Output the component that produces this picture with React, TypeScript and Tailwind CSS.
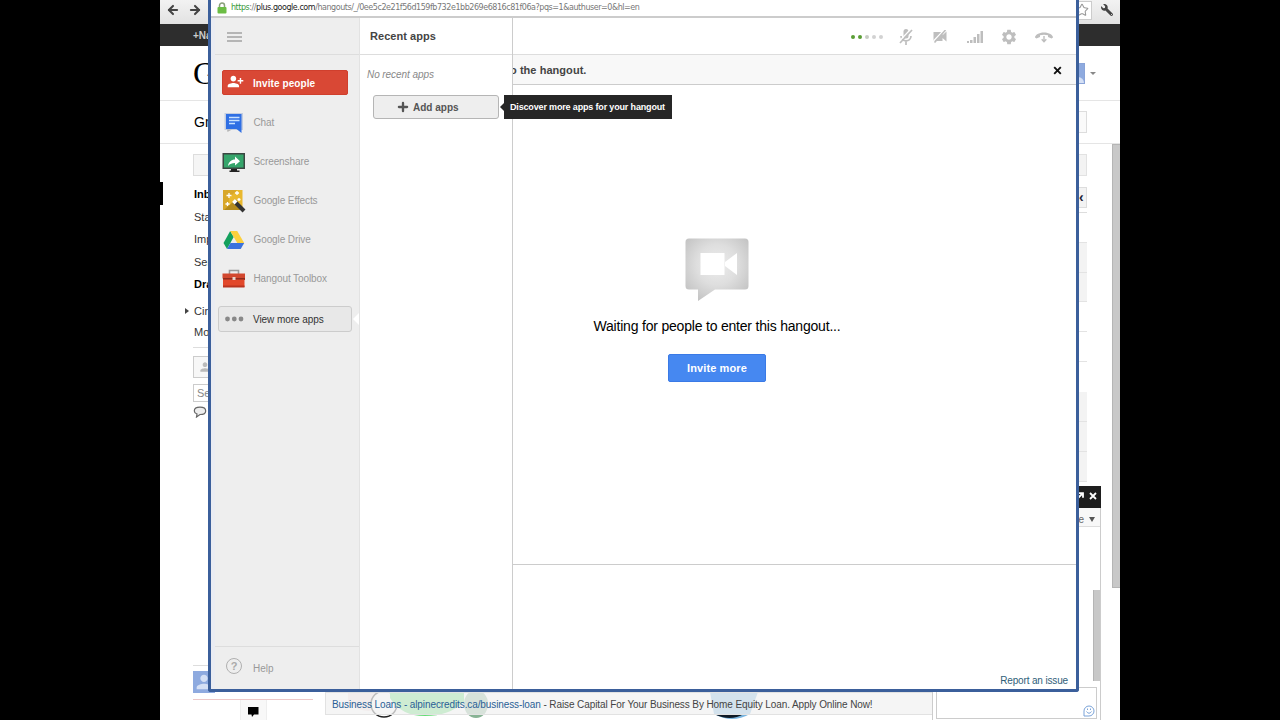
import React from 'react';
import { ArrowLeft, ArrowRight, Star, Plus } from 'lucide-react';
import { MdPersonAddAlt1, MdSettings, MdPerson } from 'react-icons/md';
import { FaWrench } from 'react-icons/fa';

const ChatIcon = () => (
  <svg width="24" height="22" viewBox="0 0 24 22">
    <rect x="2.500" y="1" width="18.500" height="17" fill="#c3cde0" />
    <path d="M4 2h15.500v19l-5-4H4z" fill="#2f6fe4" />
    <path d="M5 17.500h5l-4.500 2.500z" fill="#b5b5b5" />
    <path d="M7 5.500h10.500M7 8.500h10.500M7 11.500h6" stroke="#c9e2ff" strokeWidth="1.700" />
  </svg>
);

const ScreenshareIcon = () => (
  <svg width="24" height="22" viewBox="0 0 24 22">
    <rect x="0.500" y="2" width="22.500" height="16" fill="#3b4742" />
    <rect x="2" y="3.500" width="19.500" height="13" fill="#35a56b" />
    <path d="M9 18h6v1.500h2.500V21h-10v-1.500H9z" fill="#222" />
    <path d="M6 15c.5-4 3.500-6.500 7-6.500V5.500l5 4.700-5 4.300V12c-3 0-5 .8-7 3z" fill="#fff" />
  </svg>
);

const EffectsIcon = () => (
  <svg width="24" height="24" viewBox="0 0 24 24">
    <rect x="1" y="1" width="19.500" height="20" fill="#e9b82e" />
    <path d="M1 1h14L7 9v12H1z" fill="#d8a72a" />
    <path d="M2 21L12 12l8.500 9z" fill="#b58b1c" />
    <path d="M12 12l10 10" stroke="#333" strokeWidth="4" />
    <path d="M11.500 11.500l2.500 2.500" stroke="#fff" strokeWidth="4" />
    <path d="M7 4v5M4.500 6.500h5M15 2v4M13 4h4M5.500 13v4M3.500 15h4M17 9v3M15.500 10.500h3" stroke="#fff" strokeWidth="1.300" />
  </svg>
);

const DriveIcon = () => (
  <svg width="24" height="22" viewBox="0 0 24 22">
    <path d="M8.200 2L1.500 14l3.500 6 6.700-12z" fill="#14a05d" />
    <path d="M8.200 2h7l7 12h-7z" fill="#fcd03d" />
    <path d="M8.500 14h13.700l-3.500 6H5z" fill="#3a72dd" />
  </svg>
);

const ToolboxIcon = () => (
  <svg width="24" height="20" viewBox="0 0 24 20">
    <path d="M7.500 5V1.500h9V5" fill="none" stroke="#999" strokeWidth="1.600" />
    <rect x="0.500" y="4.500" width="22.500" height="5" fill="#d2482f" />
    <path d="M1 9h22v2H1z" fill="#8f2b1d" />
    <rect x="1" y="10.500" width="21.500" height="7.500" fill="#e2482b" />
    <rect x="1" y="16.500" width="21.500" height="2" fill="#b93420" />
    <rect x="10.500" y="8" width="3" height="3" fill="#e8d4cc" />
  </svg>
);

const MicOffIcon = () => (
  <svg width="14" height="18" viewBox="0 0 14 18" fill="none">
    <rect x="4.500" y="1" width="5" height="9.500" rx="2.500" fill="#bebebe" />
    <path d="M2 8c0 6.500 10 6.500 10 0M7 12.500V17" stroke="#bebebe" strokeWidth="1.700" />
    <path d="M11.500 1.500L0 13.500" stroke="#fff" strokeWidth="1.300" />
    <path d="M13 2L1 15" stroke="#bebebe" strokeWidth="1.700" />
  </svg>
);

const CameraOffIcon = () => (
  <svg width="14" height="13" viewBox="0 0 14 13">
    <path d="M.5 2h9v3.200L13.500 1.500v10L9.500 8v3h-9z" fill="#bebebe" />
    <path d="M11 0L0 11.500" stroke="#fff" strokeWidth="1.300" />
    <path d="M12.500 0L1.500 12.500" stroke="#bebebe" strokeWidth="1.600" />
  </svg>
);

const SignalIcon = () => (
  <svg width="18" height="14" viewBox="0 0 18 14" fill="#bebebe">
    <rect x="0" y="11" width="2" height="2" />
    <rect x="3" y="10" width="2.500" height="3" />
    <rect x="6.500" y="7" width="2.500" height="6" />
    <rect x="10" y="4" width="2.500" height="9" />
    <rect x="13.500" y="1" width="2.500" height="12" />
  </svg>
);

const HangupIcon = () => (
  <svg width="20" height="14" viewBox="0 0 20 14">
    <path d="M1 7.500C1 5 5 2.500 10 2.500S19 5 19 7.500l-1.500 1-3.500-1.500V5.300c-2.500-.9-5.500-.9-8 0V7L2.500 8.500z" fill="#bebebe" />
    <path d="M10 6v5M7.700 9.300l2.300 2.400 2.300-2.400" stroke="#bebebe" strokeWidth="1.400" fill="none" />
  </svg>
);

const HangoutLogo = () => (
  <svg width="64" height="64" viewBox="0 0 64 64">
    <defs>
      <radialGradient id="bubble" cx="50%" cy="42%" r="65%">
        <stop offset="0" stopColor="#ededed" />
        <stop offset=".5" stopColor="#dedede" />
        <stop offset="1" stopColor="#c2c2c2" />
      </radialGradient>
    </defs>
    <path d="M4 .5h56a3.500 3.500 0 0 1 3.500 3.500v44a3.500 3.500 0 0 1-3.500 3.500H30L13 63V51.500H4A3.500 3.500 0 0 1 .5 48V4A3.500 3.500 0 0 1 4 .5z" fill="url(#bubble)" />
    <path d="M15.500 15h24v22h-24zM40 24l12-9v22l-12-9z" fill="#fff" />
  </svg>
);

const apps = [
  { name: 'Chat', icon: <ChatIcon /> },
  { name: 'Screenshare', icon: <ScreenshareIcon /> },
  { name: 'Google Effects', icon: <EffectsIcon /> },
  { name: 'Google Drive', icon: <DriveIcon /> },
  { name: 'Hangout Toolbox', icon: <ToolboxIcon /> },
];

const folders = [
  { name: 'Inbox', bold: true },
  { name: 'Starred', bold: false },
  { name: 'Important', bold: false },
  { name: 'Sent Mail', bold: false },
  { name: 'Drafts', bold: true },
];

function MailPage() {
  return (
    <div className="flex h-full flex-col bg-white">
      <div className="flex h-6 shrink-0 items-center bg-gradient-to-b from-[#f2f2f2] to-[#e2e2e2] pb-1 pl-1.5 pr-[7px] text-[#444]">
        <ArrowLeft size={14} strokeWidth={3.500} />
        <ArrowRight size={14} strokeWidth={3.500} className="ml-2" />
        <div className="ml-auto flex h-[19px] w-[26px] items-center justify-end border border-l-0 border-[#ccc] bg-white pr-0.5">
          <Star size={14} strokeWidth={1.800} className="text-[#999]" />
        </div>
        <FaWrench size={12} className="ml-[9px] -scale-x-100" />
      </div>
      <div className="h-[22px] shrink-0 bg-[#2d2d2d] pl-[33px] text-[10px] font-bold leading-[23px] text-[#ccc]">+Nathan</div>
      <div className="flex h-[55px] shrink-0 items-center justify-between border-b border-[#e5e5e5] pl-[33px] pr-6">
        <span className="font-['Liberation_Serif',serif] text-[32px] leading-none text-black">G</span>
        <div className="flex items-center gap-[5px]">
          <div className="flex h-[21px] w-5 items-end justify-end overflow-hidden border border-[#8aa4d8] bg-[#8eaadf]">
            <div className="size-1.5 rounded-tr-full bg-[#d5e0f5]"></div>
          </div>
          <div className="border-x-[3px] border-t-[3px] border-x-transparent border-t-[#888]"></div>
        </div>
      </div>
      <div className="flex h-[43px] shrink-0 items-center justify-between border-b border-[#e5e5e5] pl-[34px] pr-[33px]">
        <span className="text-[14px] text-black">Gmail</span>
        <div className="h-[22px] w-5 border border-[#ddd] bg-[#fafafa]"></div>
      </div>

      <div className="flex min-h-0 flex-1">
        <div className="flex w-[153px] shrink-0 flex-col text-[11px] text-[#333]">
          <div className="ml-[33px] mt-2.5 h-[22px] shrink-0 border border-[#ddd] bg-[#f5f5f5]"></div>
          <div className="mt-1.5 flex flex-col">
            {folders.map((folder) => (
              <div
                key={folder.name}
                className={folder.bold ? 'flex h-[22.500px] items-center font-bold text-black' : 'flex h-[22.500px] items-center'}
              >
                <div className={folder.name === 'Inbox' ? 'h-full w-[3px] bg-black' : 'w-[3px]'}></div>
                <span className="pl-[31px] pt-0.5">{folder.name}</span>
              </div>
            ))}
          </div>
          <div className="mt-[6px] flex h-[21px] items-center">
            <div className="ml-[25px] border-y-[3px] border-l-4 border-y-transparent border-l-[#444]"></div>
            <span className="pl-[5px]">Circles</span>
          </div>
          <div className="flex h-[22px] items-center pl-[34px]">More</div>
          <div className="ml-[33px] mt-[3px] border-t border-[#ddd]"></div>
          <div className="ml-[33px] mt-2 flex h-[22px] shrink-0 items-center border border-[#ccc] bg-[#f7f7f7] pl-1">
            <MdPerson size={14} className="text-[#bbb]" />
          </div>
          <div className="ml-[33px] mt-[6px] h-[18px] shrink-0 border border-[#ccc] pl-[3px] leading-4 text-[#888]">Search</div>
          <svg width="14" height="12" viewBox="0 0 14 12" className="ml-[33px] mt-1 shrink-0">
            <path d="M7 1.200c3.500 0 5.700 1.600 5.700 3.700S10.500 8.500 7 8.500L3.500 11l.5-3C2.200 7.300 1.300 6.300 1.300 4.900c0-2.100 2.200-3.700 5.700-3.700z" fill="#eee" stroke="#666" strokeWidth="1.200" />
          </svg>
          <div className="ml-[33px] mt-[247px] border-t border-[#ddd]"></div>
          <div className="ml-[33px] mt-[5px] flex h-[22px] w-[22px] shrink-0 items-end overflow-hidden bg-[#8eaadf]">
            <MdPerson size={22} className="text-[#d5e0f5]" />
          </div>
          <div className="ml-[33px] mt-1.5 w-[120px] border-t border-[#ecc8c8]"></div>
          <div className="ml-20 flex h-5 w-[27px] shrink-0 items-center justify-center border-x border-[#eee] bg-[#f8f8f8] pt-1">
            <svg width="11" height="10" viewBox="0 0 11 10"><path d="M0 0h10.500v7.500H6L4 10 3.500 7.500H0z" fill="#000" /></svg>
          </div>
        </div>

        <div className="flex flex-1 flex-col justify-end">
          <div className="relative ml-3 h-[28px] w-[620px]">
            <svg width="620" height="28" className="absolute left-0 top-0">
              <path d="M23 0h34v16q-20 8-34-6z" fill="#f3dede" />
              <circle cx="59" cy="12" r="13" fill="#fff" stroke="#222" strokeWidth="1.500" />
              <path d="M65 0h74v10q-15 14-39 14T65 6z" fill="#63dc74" />
              <ellipse cx="151" cy="12" rx="12" ry="14" fill="#87b394" />
              <path d="M385 0h48l-8 22q-18 10-36 0z" fill="#79b5e0" />
              <path d="M389 22h30q-14 8-30 0z" fill="#0e1a26" />
            </svg>
            <div className="relative h-[23px] whitespace-nowrap border border-[#e2e2e2] bg-[#f2f2f2]/75 pl-1.5 text-[10px] leading-6 tracking-[-0.100px] text-[#444]">
              <span className="text-[#2a5f96]">Business Loans - alpinecredits.ca/business-loan</span> - Raise Capital For Your Business By Home Equity Loan. Apply Online Now!
            </div>
          </div>
        </div>

        <div className="flex w-[13px] shrink-0 flex-col pt-2.5">
          <div className="h-[22px] w-2 shrink-0 border-y border-r border-[#e2e2e2] bg-[#f3f3f3]"></div>
          <div className="mt-[11px] h-[21px] w-2 shrink-0 border-y border-r border-[#ddd] bg-[#f3f3f3] text-[14px] font-bold leading-[18px] text-[#223]">‹</div>
          <div className="mt-1 h-[30px] w-2 shrink-0 border-t border-[#ddd]"></div>
          <div className="h-[30px] w-2 shrink-0 border-t border-[#e3e3e3] bg-[#f3f3f3]"></div>
          <div className="h-[30px] w-2 shrink-0 border-y border-[#e3e3e3] bg-[#f3f3f3]"></div>
          <div className="h-[30px] w-2 shrink-0 border-b border-[#e3e3e3]"></div>
          <div className="h-[30px] w-2 shrink-0 border-b border-[#e3e3e3]"></div>
          <div className="h-[30px] w-2 shrink-0"></div>
          <div className="h-[30px] w-2 shrink-0 border-b border-[#e3e3e3] bg-[#f3f3f3]"></div>
          <div className="h-[30px] w-2 shrink-0 border-b border-[#e3e3e3] bg-[#f3f3f3]"></div>
          <div className="h-[30px] w-2 shrink-0 border-b border-[#e3e3e3] bg-[#f3f3f3]"></div>
        </div>
        <div className="ml-5 h-[444px] w-2 shrink-0 border border-r-0 border-[#b5b5b5] bg-[#c8c8c8]"></div>
      </div>
    </div>
  );
}

function ChatPopup() {
  return (
    <div className="absolute bottom-0 right-[19px] flex h-[234px] w-[169px] flex-col border-x border-[#ccc] bg-white">
      <div className="-mr-px flex h-[22px] shrink-0 items-center justify-end gap-[5px] bg-[#1e1e1e] pb-0.5 pr-1 text-white">
        <svg width="8" height="8" viewBox="0 0 8 8"><path d="M1 7l5-5M2.500 1.200H7v4.500" stroke="currentColor" strokeWidth="1.800" fill="none" /></svg>
        <svg width="8" height="8" viewBox="0 0 8 8"><path d="M1 1l6 6M7 1L1 7" stroke="currentColor" strokeWidth="1.800" /></svg>
      </div>
      <div className="flex h-[19px] shrink-0 items-center justify-end gap-[5px] border-b border-[#ddd] bg-[#f8f8f8] pr-[5px] pt-1 text-[10px] text-[#666]">
        <span>More</span>
        <div className="border-x-[3px] border-t-[5px] border-x-transparent border-t-[#555]"></div>
      </div>
      <div className="ml-auto mt-[63px] h-[91px] w-[7px] shrink-0 border-l border-[#b5b5b5] bg-[#c8c8c8]"></div>
      <div className="mx-[3px] mt-1.5 flex h-8 shrink-0 items-end justify-end border border-[#ccc] p-px">
        <svg width="12" height="12" viewBox="0 0 12 12" fill="none" stroke="#7aa3d8">
          <path d="M1 11V6a5 5 0 1 1 5 5z" />
          <path d="M3.500 6.500q2.500 3.500 5 0M4.500 3.500v1.500M7.500 3.500v1.500" />
        </svg>
      </div>
    </div>
  );
}

function Sidebar() {
  return (
    <div className="flex w-[149px] shrink-0 flex-col border-l-4 border-r border-l-[#eaecf2] border-r-[#e2e2e2] bg-[#eee]">
      <div className="flex h-[37px] shrink-0 flex-col gap-0.5 border-b border-[#ddd] pl-3 pt-3.5">
        <div className="h-0.5 w-[15px] bg-[#b5b5b5]"></div>
        <div className="h-0.5 w-[15px] bg-[#b5b5b5]"></div>
        <div className="h-0.5 w-[15px] bg-[#b5b5b5]"></div>
      </div>
      <button className="ml-[7px] mt-[15px] flex h-[25px] w-[126px] shrink-0 items-center rounded-[2px] border border-[#d03f2d] bg-[#d94835] pl-1 text-[10px] font-bold tracking-[0.080px] text-white">
        <MdPersonAddAlt1 size={17} className="-mt-0.5" />
        <span className="ml-[9px] pt-0.5">Invite people</span>
      </button>
      <div className="mt-2 flex flex-col">
        {apps.map((app) => (
          <div key={app.name} className="flex h-[39px] items-center pl-[7px] text-[10px] tracking-[-0.100px] text-[#999]">
            <div className="w-[31.500px]">{app.icon}</div>
            <span>{app.name}</span>
          </div>
        ))}
      </div>
      <div className="ml-[3px] mt-2 flex h-[26px] w-[141px] shrink-0 items-center">
        <div className="flex h-full w-[134px] items-center rounded-[3px] border border-[#ccc] bg-[#e8e8e8] pl-1.5 text-[10px] tracking-[-0.060px] text-[#333]">
          <svg width="20" height="6" viewBox="0 0 20 6" fill="#888" className="mr-2">
            <circle cx="2.500" cy="3" r="2.400" />
            <circle cx="9.300" cy="3" r="2.400" />
            <circle cx="16" cy="3" r="2.400" />
          </svg>
          View more apps
        </div>
        <div className="ml-px border-y-[6px] border-r-[6px] border-y-transparent border-r-white"></div>
      </div>
      <div className="mt-auto flex h-[43px] shrink-0 items-center border-t border-[#ddd] pl-[11px] text-[10px] text-[#999]">
        <div className="-mt-1 mr-[11px] flex size-4 items-center justify-center rounded-full border-[1.500px] border-[#b0b0b0] text-[11px] font-bold text-[#aaa]">?</div>
        Help
      </div>
    </div>
  );
}

function AppsPanel() {
  return (
    <div className="relative z-10 flex w-[153px] shrink-0 flex-col border-r border-[#ccc] bg-white">
      <div className="flex h-[37px] shrink-0 items-center border-b border-[#ddd] pl-2.5 pt-px text-[11px] font-bold tracking-[0.050px] text-[#444]">
        Recent apps
      </div>
      <p className="mt-3 pl-[7px] text-[10px] italic leading-4 tracking-[-0.070px] text-[#888]">No recent apps</p>
      <button className="ml-[13px] mt-3 flex h-6 w-[126px] items-center rounded-[3px] border border-[#b5b5b5] bg-[#eee] pl-[22px] text-[10px] font-bold text-[#555]">
        <Plus size={14} strokeWidth={4} className="mr-[3px]" />
        <span className="pt-px">Add apps</span>
      </button>
      <div className="absolute left-[140px] top-[77px] flex items-center">
        <div className="border-y-4 border-r-4 border-y-transparent border-r-[#262626]"></div>
        <div className="flex h-6 w-[168px] items-center whitespace-nowrap bg-[#262626] pl-1.5 pt-px text-[9px] font-bold tracking-[-0.160px] text-white">
          Discover more apps for your hangout
        </div>
      </div>
    </div>
  );
}

function VideoArea() {
  return (
    <div className="flex min-w-0 flex-1 flex-col bg-white">
      <div className="flex h-[37px] shrink-0 items-center justify-end border-b border-[#ddd] pr-[22px] pt-px text-[#bebebe]">
        <div className="mr-4 flex gap-[3px]">
          <div className="size-1 rounded-full bg-[#5a9e35]"></div>
          <div className="size-1 rounded-full bg-[#5a9e35]"></div>
          <div className="size-1 rounded-full bg-[#c8ccc5]"></div>
          <div className="size-1 rounded-full bg-[#d2d2d2]"></div>
          <div className="size-1 rounded-full bg-[#d2d2d2]"></div>
        </div>
        <MicOffIcon />
        <div className="ml-5"><CameraOffIcon /></div>
        <div className="ml-5"><SignalIcon /></div>
        <MdSettings size={18} className="ml-[15px]" />
        <div className="ml-4"><HangupIcon /></div>
      </div>
      <div className="flex h-[30px] shrink-0 items-center border-b border-[#ccc] bg-[#f8f8f8] pr-3.5">
        <span className="-ml-[3px] pt-px text-[11px] font-bold tracking-[0.050px] text-[#444]">o the hangout.</span>
        <svg width="9" height="9" viewBox="0 0 9 9" className="ml-auto mt-px"><path d="M1.200 1.200l6.600 6.600M7.800 1.200L1.200 7.800" stroke="#111" strokeWidth="1.900" /></svg>
      </div>
      <div className="flex h-[480px] shrink-0 flex-col border-b border-[#ccc]">
        <div className="flex w-[408px] flex-col items-center pt-[153px]">
          <HangoutLogo />
          <p className="mt-3.5 whitespace-nowrap text-[14px] leading-5 tracking-[-0.200px] text-black">Waiting for people to enter this hangout...</p>
          <button className="mt-[18px] h-7 w-[98px] rounded-[2px] border border-[#3a7ae6] bg-[#4688f1] text-[11px] font-bold tracking-[0.120px] text-white">
            Invite more
          </button>
        </div>
      </div>
      <div className="flex flex-1 items-end justify-end pb-px pr-2 text-[10px] tracking-[-0.150px] text-[#2f6079]">Report an issue</div>
    </div>
  );
}

function HangoutWindow() {
  return (
    <div className="absolute left-12 top-0 flex h-[692px] w-[871px] flex-col rounded-b-[3px] border-x-[3px] border-b-[3px] border-[#3b5f9b] bg-white">
      <div className="flex h-[18px] shrink-0 items-center border-b-2 border-[#ccc] pl-1.5">
        <svg width="10" height="12" viewBox="0 0 10 12">
          <path d="M2.500 6V3.500a2.500 2.500 0 0 1 5 0V6" fill="none" stroke="#8aa07c" strokeWidth="1.500" />
          <rect x=".5" y="5" width="9" height="6.500" rx="1" fill="#6cbd45" />
        </svg>
        <span className="ml-1 whitespace-nowrap font-['DejaVu_Sans',sans-serif] text-[8px] tracking-[-0.450px] text-[#777]">
          <span className="text-[#3a9a3a]">https</span>://<span className="text-[#222]">plus.google.com</span>/hangouts/_/0ee5c2e21f56d159fb732e1bb269e6816c81f06a?pqs=1&amp;authuser=0&amp;hl=en
        </span>
      </div>
      <div className="flex min-h-0 flex-1">
        <Sidebar />
        <AppsPanel />
        <VideoArea />
      </div>
    </div>
  );
}

export default function App() {
  return (
    <div className="flex h-[720px] w-[1280px] justify-center overflow-hidden bg-black font-['Liberation_Sans',sans-serif]">
      <div className="relative h-full w-[960px] overflow-hidden">
        <MailPage />
        <ChatPopup />
        <HangoutWindow />
      </div>
    </div>
  );
}
